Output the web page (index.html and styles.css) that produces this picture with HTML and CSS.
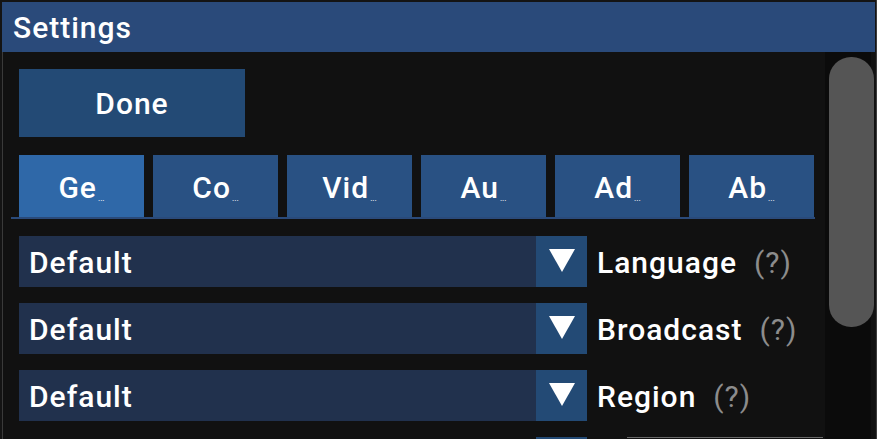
FILE: index.html
```html
<!DOCTYPE html>
<html lang="en">

<head>
    <meta charset="UTF-8">
    <meta name="viewport" content="width=device-width, initial-scale=1.0">
    <title>Settings</title>
    <link rel="stylesheet" href="styles.css">
</head>

<body>
    <div class="window">
        <div class="titlebar">Settings</div>

        <div class="main">
            <section class="panel">
                <button class="doneButton">Done</button>

                <div class="tabs">
                    <div class="tab active">Ge<span class="dots">...</span></div>
                    <div class="tab">Co<span class="dots">...</span></div>
                    <div class="tab">Vid<span class="dots">...</span></div>
                    <div class="tab">Au<span class="dots">...</span></div>
                    <div class="tab">Ad<span class="dots">...</span></div>
                    <div class="tab">Ab<span class="dots">...</span></div>
                </div>

                <div class="rows">
                    <div class="row">
                        <div class="select">
                            <span class="value">Default</span>
                            <span class="arrow"><svg width="26" height="23" viewBox="0 0 26 23"><polygon points="0,0 26,0 13,23" fill="#fff"/></svg></span>
                        </div>
                        <span class="label">Language</span>
                        <span class="help">(?)</span>
                    </div>
                    <div class="row">
                        <div class="select">
                            <span class="value">Default</span>
                            <span class="arrow"><svg width="26" height="23" viewBox="0 0 26 23"><polygon points="0,0 26,0 13,23" fill="#fff"/></svg></span>
                        </div>
                        <span class="label">Broadcast</span>
                        <span class="help">(?)</span>
                    </div>
                    <div class="row">
                        <div class="select">
                            <span class="value">Default</span>
                            <span class="arrow"><svg width="26" height="23" viewBox="0 0 26 23"><polygon points="0,0 26,0 13,23" fill="#fff"/></svg></span>
                        </div>
                        <span class="label">Region</span>
                        <span class="help">(?)</span>
                    </div>
                    <!-- next row, only its top edge shows above the fold -->
                    <div class="row">
                        <div class="select plain">
                            <span class="arrow"></span>
                        </div>
                        <span class="rule"></span>
                    </div>
                </div>
            </section>

            <div class="scrollTrack">
                <div class="scrollThumb"></div>
            </div>
        </div>
    </div>
</body>

</html>
```

FILE: styles.css
```css
body {
    margin: 0;
    padding: 0;
    background-color: #141414;
    font-family: Roboto, 'Noto Sans', sans-serif;
    color: #fff;
    overflow: hidden;
}

.window {
    height: 439px;
    display: flex;
    flex-direction: column;
    padding: 2px 1px 0 2px;
    box-sizing: border-box;
    border-right: 1px solid #3c3c3c;
}

.titlebar {
    height: 50px;
    background-color: #2a4a7a;
    padding-left: 11px;
    font-size: 30px;
    font-weight: 500;
    letter-spacing: 1px;
    line-height: 52px;
    flex-shrink: 0;
}

.main {
    flex: 1;
    display: flex;
    overflow: hidden;
}

.panel {
    flex: 1;
    background-color: #111;
    border-left: 1px solid #3a3a3a;
    padding: 17px 0 0 16px;
}

.doneButton {
    width: 226px;
    height: 68px;
    background-color: #234a75;
    color: #fff;
    border: none;
    font-family: Roboto, sans-serif;
    font-size: 30px;
    font-weight: 500;
    letter-spacing: 1px;
    padding: 0;
    display: block;
}

.tabs {
    display: flex;
    gap: 9px;
    width: 796px;
    margin: 18px 0 0 -8px;
    padding-left: 8px;
    border-bottom: 2px solid #2a4a7a;
}

.tab {
    width: 125px;
    height: 62px;
    background-color: #295183;
    font-size: 30px;
    font-weight: 500;
    letter-spacing: 1px;
    display: flex;
    align-items: center;
    justify-content: center;
    padding-top: 2px;
    box-sizing: border-box;
}

.tab.active {
    background-color: #2f68a8;
}

.tab .dots {
    font-size: 8px;
    letter-spacing: 0;
    margin-top: 22px;
    margin-left: 1px;
}

.rows {
    display: flex;
    flex-direction: column;
    gap: 16px;
    margin-top: 17px;
}

.row {
    display: flex;
    align-items: center;
    height: 51px;
    flex-shrink: 0;
}

.select {
    width: 568px;
    height: 51px;
    display: flex;
    justify-content: flex-end;
    background-color: #21314d;
}

.select.plain {
    background-color: transparent;
}

.select .value {
    flex: 1;
    padding-left: 10px;
    font-size: 30px;
    font-weight: 500;
    letter-spacing: 1px;
    line-height: 53px;
}

.select .arrow {
    width: 51px;
    height: 51px;
    background-color: #234a75;
    display: flex;
    justify-content: center;
    padding-top: 13px;
    box-sizing: border-box;
}

.label {
    margin-left: 10px;
    font-size: 30px;
    font-weight: 500;
    letter-spacing: 1px;
    padding-top: 2px;
}

.help {
    margin-left: 17px;
    font-size: 30px;
    letter-spacing: 1px;
    color: #8c8c8c;
    padding-top: 2px;
}

.rule {
    align-self: flex-start;
    width: 196px;
    margin-left: 40px;
    border-top: 1px solid #6a6a6a;
}

.scrollTrack {
    width: 50px;
    background-color: #0b0b0b;
    padding: 5px 4px 0 4px;
    box-sizing: border-box;
    border-right: 4px solid #111;
}

.scrollThumb {
    width: 45px;
    height: 270px;
    background-color: #555;
    border-radius: 22px;
}
```
